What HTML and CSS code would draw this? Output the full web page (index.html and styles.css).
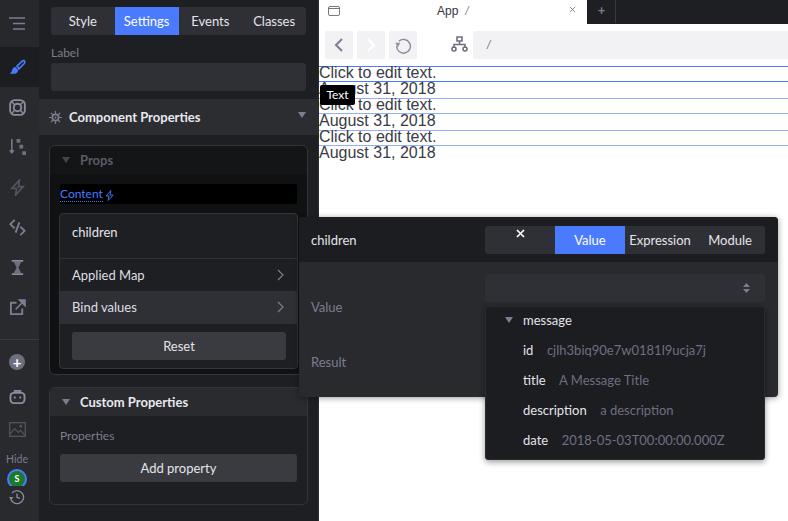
FILE: index.html
```html
<!DOCTYPE html>
<html lang="en">
<head>
<meta charset="utf-8">
<title>Editor</title>
<link rel="stylesheet" href="styles.css">
</head>
<body>
<div class="app">
  <nav class="rail">
    <div class="rail-item rail-top">
      <svg class="ico" viewBox="0 0 17 14"><path d="M0 1.500h16M4 7h12M4 12.500h12" fill="none" stroke="#7c7d90" stroke-width="1.700"/></svg>
    </div>
    <div class="rail-item rail-active">
      <svg class="ico" viewBox="0 0 18 18"><path d="M8.500 7.500L14 2.200c1-.9 2.700-.6 2.700.9 0 .9-.5 1.600-1 2.200L10.500 10.500z" fill="none" stroke="#4a7bff" stroke-width="1.800"/><path d="M7 8.500c-2 .1-3 1.300-3.500 3-.4 1.300-.8 2.500-2.500 4h5.500c1.800-.3 3-1.800 3.200-3.500z" fill="#4a7bff"/></svg>
    </div>
    <div class="rail-item">
      <svg class="ico" viewBox="0 0 18 18"><rect x="1.200" y="1.200" width="15.600" height="15.600" rx="5" fill="none" stroke="#8b8c9e" stroke-width="2"/><circle cx="9" cy="9" r="4" fill="none" stroke="#8b8c9e" stroke-width="2"/><path d="M3 3l3 3M15 3l-3 3M3 15l3-3M15 15l-3-3" stroke="#8b8c9e" stroke-width="1.500"/></svg>
    </div>
    <div class="rail-item">
      <svg class="ico" viewBox="0 0 18 18"><path d="M3 0v14" stroke="#7c7d90" stroke-width="1.600"/><path d="M0 12h6l-3 4z" fill="#7c7d90"/><path d="M8 0h4v4H8zM11 6h4v4h-4zM14 13h4v4h-4z" fill="#6d6e80"/></svg>
    </div>
    <div class="rail-item">
      <svg class="ico" viewBox="0 0 18 18"><path d="M11 1L3 10h5l-1 7 8-9h-5z" fill="none" stroke="#53545f" stroke-width="1.800"/></svg>
    </div>
    <div class="rail-item">
      <svg class="ico" viewBox="0 0 18 18"><path d="M6 1L1.500 5.500 6 10M12 8l4.500 4.500L12 17M11 3.500L7 14.500" fill="none" stroke="#7c7d90" stroke-width="2"/></svg>
    </div>
    <div class="rail-item">
      <svg class="ico" viewBox="0 0 18 18"><path d="M3 1h12v2H3zM3 15h12v2H3z" fill="#8b8c9e"/><path d="M5 3h8l-3 6 3 6H5l3-6z" fill="#6d6e80"/></svg>
    </div>
    <div class="rail-item">
      <svg class="ico" viewBox="0 0 18 18"><path d="M8 4H2v12h12v-6" fill="none" stroke="#7c7d90" stroke-width="2"/><path d="M7 11l8-8M11 1h6v6z" stroke="#7c7d90" stroke-width="1.600" fill="#7c7d90"/></svg>
    </div>
    <div class="rail-bottom">
      <div class="plus">+</div>
      <svg class="ico-b" viewBox="0 0 18 16"><rect x="1.500" y="3" width="15" height="11" rx="3.500" fill="none" stroke="#8b8c9e" stroke-width="2"/><path d="M5 1h8" stroke="#8b8c9e" stroke-width="2"/><path d="M5 7h2v2H5zM11 7h2v2h-2z" fill="#8b8c9e"/></svg>
      <svg class="ico-b" viewBox="0 0 18 16"><rect x=".7" y=".7" width="16.600" height="14.600" fill="none" stroke="#53545f" stroke-width="1.400"/><path d="M1 13l5-6 4 4 2-2 5 5" fill="none" stroke="#53545f" stroke-width="1.300"/><circle cx="12.500" cy="4.500" r="1.500" fill="#53545f"/></svg>
      <div class="hide">Hide</div>
      <div class="avatar-clip"><div class="avatar">S</div></div>
      <svg class="ico-h" viewBox="0 0 18 18"><path d="M3.500 4.500A7.300 7.300 0 1 1 1.800 9.500" fill="none" stroke="#8b8c9e" stroke-width="1.500"/><path d="M0 9h5l-2.500 3z" fill="#8b8c9e"/><path d="M9 5v4.500l3.500 1" fill="none" stroke="#8b8c9e" stroke-width="1.500"/></svg>
    </div>
  </nav>

  <aside class="panel">
    <div class="panel-top">
      <div class="seg">
        <span class="seg-tab">Style</span>
        <span class="seg-tab seg-on">Settings</span>
        <span class="seg-tab">Events</span>
        <span class="seg-tab">Classes</span>
      </div>
      <div class="label">Label</div>
      <div class="field"></div>
    </div>
    <div class="section-head">
      <svg class="bug" viewBox="0 0 14 14"><circle cx="7" cy="7" r="3.400" fill="none" stroke="#7c7d90" stroke-width="1.800"/><circle cx="7" cy="7" r="1" fill="#7c7d90"/><path d="M7 0v3M7 11v3M0 7h3M11 7h3M2 2l2 2M12 2l-2 2M2 12l2-2M12 12l-2-2" stroke="#7c7d90" stroke-width="1.300"/></svg>
      <span class="section-title">Component Properties</span>
      <span class="tri tri-head"></span>
    </div>
    <div class="props-box">
      <div class="props-head"><span class="tri tri-dim"></span><span class="props-title">Props</span></div>
      <div class="content-row"><span class="content-link">Content</span><svg class="bolt" viewBox="0 0 10 12"><path d="M6.500.5L1.200 6.500h3.300L3.500 11.500 9 5.500H5.500z" fill="none" stroke="#4a7bff" stroke-width="1"/></svg></div>
      <div class="menu">
        <div class="menu-title">children</div>
        <div class="menu-row">Applied Map<svg class="chev" viewBox="0 0 7 12"><path d="M1 1l5 5-5 5" fill="none" stroke="#7c7d90" stroke-width="1.200"/></svg></div>
        <div class="menu-row menu-row-on">Bind values<svg class="chev" viewBox="0 0 7 12"><path d="M1 1l5 5-5 5" fill="none" stroke="#7c7d90" stroke-width="1.200"/></svg></div>
        <div class="menu-foot"><div class="btn btn-reset">Reset</div></div>
      </div>
    </div>
    <div class="custom-box">
      <div class="custom-head"><span class="tri tri-custom"></span><span class="custom-title">Custom Properties</span></div>
      <div class="custom-body">
        <div class="label-sm">Properties</div>
        <div class="btn btn-add">Add property</div>
      </div>
    </div>
  </aside>

  <main class="preview">
    <div class="tabbar">
      <div class="tab">
        <svg class="win" viewBox="0 0 12 10"><rect x=".5" y=".5" width="11" height="9" rx="1.500" fill="none" stroke="#55565f" stroke-width=".8"/><path d="M.5 2.500h11" stroke="#55565f" stroke-width=".8"/></svg>
        <span class="tab-name">App</span><span class="tab-path">/</span>
        <svg class="tab-x" viewBox="0 0 8 8"><path d="M1 1l6 6M7 1l-6 6" stroke="#66676f" stroke-width=".9"/></svg>
      </div>
      <div class="tab-black"><div class="tab-plus">+</div></div>
    </div>
    <div class="navbar">
      <div class="nav-btn"><svg class="nav-ico" viewBox="0 0 10 14"><path d="M8 1L2 7l6 6" fill="none" stroke="#7c7d90" stroke-width="2"/></svg></div>
      <div class="nav-btn"><svg class="nav-ico" viewBox="0 0 10 14"><path d="M2 1l6 6-6 6" fill="none" stroke="#fff" stroke-width="2"/></svg></div>
      <div class="nav-btn"><svg class="nav-reload" viewBox="0 0 18 18"><path d="M4 4.500A7.300 7.300 0 1 1 1.700 9.500" fill="none" stroke="#8b8c9e" stroke-width="1.500"/><path d="M.5 6h5L3 11z" fill="#8b8c9e"/></svg></div>
      <svg class="tree" viewBox="0 0 17 16"><path d="M6 1h5v4H6zM8.500 5v3M3 12V8.500h11V12" fill="none" stroke="#6d6e80" stroke-width="1.600"/><circle cx="3" cy="13" r="2" fill="none" stroke="#6d6e80" stroke-width="1.600"/><circle cx="14" cy="13" r="2" fill="none" stroke="#6d6e80" stroke-width="1.600"/></svg>
      <div class="address">/</div>
    </div>
    <div class="canvas">
      <div class="line line-sel">Click to edit text.</div>
      <div class="line">August 31, 2018</div>
      <div class="line line-hov">Click to edit text.</div>
      <div class="line">August 31, 2018</div>
      <div class="line line-hov">Click to edit text.</div>
      <div class="line">August 31, 2018</div>
      <div class="tip">Text</div>
    </div>
  </main>

  <section class="binder">
    <header class="binder-head">
      <span class="binder-name">children</span>
      <div class="seg seg-binder">
        <span class="seg-tab"><svg class="close" viewBox="0 0 9 9"><path d="M1 1l7 7M8 1L1 8" stroke="#fff" stroke-width="1.700"/></svg></span>
        <span class="seg-tab seg-on">Value</span>
        <span class="seg-tab">Expression</span>
        <span class="seg-tab">Module</span>
      </div>
    </header>
    <div class="binder-body">
      <div class="binder-labels">
        <span class="binder-label">Value</span>
        <span class="binder-label">Result</span>
      </div>
      <div class="binder-value">
        <div class="select"><svg class="updown" viewBox="0 0 7 10"><path d="M3.500 0L7 4H0zM3.500 10L0 6h7z" fill="#7c7d90"/></svg></div>
        <div class="dropdown">
          <div class="dd-row dd-root"><span class="tri tri-dd"></span><span class="dd-key">message</span></div>
          <div class="dd-row"><span class="dd-key">id</span><span class="dd-val">cjlh3biq90e7w0181l9ucja7j</span></div>
          <div class="dd-row"><span class="dd-key">title</span><span class="dd-val">A Message Title</span></div>
          <div class="dd-row"><span class="dd-key">description</span><span class="dd-val">a description</span></div>
          <div class="dd-row"><span class="dd-key">date</span><span class="dd-val">2018-05-03T00:00:00.000Z</span></div>
        </div>
      </div>
    </div>
  </section>
</div>
</body>
</html>
```
FILE: styles.css
```css
* { box-sizing: border-box; }
html, body { margin: 0; padding: 0; height: 100%; overflow: hidden; }
body { font-family: "Lato", sans-serif; font-size: 13px; color: #e4e4ea; background: #fff; }
.app { position: relative; display: flex; width: 788px; height: 521px; overflow: hidden; }

.rail { width: 39px; flex: none; background: #292a2e; display: flex; flex-direction: column; }
.rail-item { height: 40px; padding-right: 5px; display: flex; align-items: center; justify-content: center; }
.rail-top { height: 47px; background: #27282c; }
.rail-active { background: #1c1d20; }
.ico { width: 17px; height: 17px; display: block; }
.rail-bottom { margin-top: 12px; height: 182px; border-top: 1px solid #3a3b40; display: flex; flex-direction: column; align-items: center; padding: 14px 5px 0 0; }
.plus { width: 16px; height: 16px; border-radius: 50%; background: #6d6e80; color: #fff; font-size: 15px; font-weight: 700; line-height: 16px; text-align: center; }
.ico-b { width: 17px; height: 15px; margin-top: 20px; display: block; }
.ico-b + .ico-b { margin-top: 17px; }
.hide { margin-top: 15px; font-size: 10.5px; line-height: 14px; color: #7c7d90; }
.avatar-clip { width: 20px; height: 17px; margin-top: 3px; overflow: hidden; flex: none; }
.avatar { width: 20px; height: 20px; border: 2px solid #4a7bff; border-radius: 50%; background: #1a7a2a; color: #fff; font-size: 9px; font-weight: 700; line-height: 16px; text-align: center; }
.ico-h { width: 16px; height: 16px; display: block; margin-top: 3px; }

.panel { width: 280px; flex: none; background: #1e1f22; border-right: 1px solid #2c2d31; display: flex; flex-direction: column; }
.panel-top { padding: 7px 12px 8px; }
.seg { display: flex; height: 28px; background: #2f3035; border-radius: 3px; overflow: hidden; }
.seg-tab { flex: 1; display: flex; align-items: center; justify-content: center; font-size: 13px; color: #e4e4ea; }
.seg-on { background: #4a7bff; color: #fff; }
.label { margin-top: 9px; height: 19px; line-height: 17px; font-size: 12px; color: #7c7d90; }
.field { height: 28px; background: #2f3035; border-radius: 3px; }
.section-head { height: 36px; background: #2c2d31; display: flex; align-items: center; padding-left: 10px; position: relative; }
.bug { width: 13px; height: 13px; margin-right: 7px; }
.section-title { font-size: 13px; font-weight: 700; color: #e8e8ee; }
.tri { width: 0; height: 0; border-left: 4px solid transparent; border-right: 4px solid transparent; border-top: 6px solid #7c7d90; display: block; }
.tri-head { position: absolute; right: 12px; top: 13px; }
.props-box { position: relative; margin: 10px 10px 0; height: 230px; background: #101113; border: 1px solid #34353a; border-radius: 6px; }
.props-head { height: 28px; background: #141517; border-radius: 6px 6px 0 0; display: flex; align-items: center; padding-left: 12px; }
.tri-dim { border-top-color: #44454f; margin-right: 10px; }
.props-title { font-weight: 700; font-size: 13px; color: #5a5b63; }
.content-row { position: absolute; left: 10px; right: 10px; top: 38px; height: 20px; background: #000; border-radius: 2px; display: flex; align-items: center; }
.content-link { color: #4a7bff; font-size: 12px; line-height: 14px; border-bottom: 1px dotted #4a7bff; }
.bolt { width: 9px; height: 11px; margin-left: 2px; margin-top: 3px; }
.menu { position: absolute; left: 9px; right: 9px; top: 67px; height: 156px; background: #1e1f22; border: 1px solid #34353a; border-radius: 4px; }
.menu-title { height: 45px; padding: 10px 12px 0; font-size: 13px; border-bottom: 1px solid #303136; }
.menu-row { height: 32px; display: flex; align-items: center; justify-content: space-between; padding: 0 12px; font-size: 13px; color: #dedee4; }
.menu-row-on { background: #2f3035; height: 33px; padding-bottom: 2px; }
.chev { width: 7px; height: 12px; display: block; margin-right: 1px; }
.menu-foot { padding: 8px 11px 0 12px; }
.btn { height: 28px; background: #3a3b40; border-radius: 3px; display: flex; align-items: center; justify-content: center; font-size: 13px; color: #e4e4ea; }
.custom-box { margin: 12px 10px 0; height: 118px; border: 1px solid #34353a; border-radius: 6px; }
.custom-head { height: 28px; background: #2a2b2f; border-radius: 6px 6px 0 0; display: flex; align-items: center; padding-left: 12px; }
.tri-custom { margin-right: 10px; }
.custom-title { font-weight: 700; font-size: 13px; color: #e8e8ee; }
.custom-body { padding: 12px 10px 0; }
.label-sm { font-size: 12px; line-height: 15px; color: #7c7d90; }
.btn-add { margin-top: 11px; }

.preview { flex: 1; min-width: 0; background: #fff; display: flex; flex-direction: column; }
.tabbar { height: 24px; display: flex; }
.tab { width: 268px; flex: none; height: 24px; display: flex; align-items: center; position: relative; padding: 0 0 2px 9px; font-family: "Liberation Sans", sans-serif; font-size: 12px; color: #33343c; }
.win { width: 12px; height: 10px; }
.tab-name { margin-left: 97px; }
.tab-path { margin-left: 7px; color: #8b8c9e; font-style: italic; }
.tab-x { width: 7px; height: 7px; position: absolute; right: 11px; top: 6px; }
.tab-black { flex: 1; background: #1e1f22; border-left: 1px solid #1e1f22; }
.tab-plus { width: 28px; height: 23px; border-right: 1px solid #3a3b40; color: #7c7d90; font-size: 13px; font-weight: 700; text-align: center; line-height: 20px; }
.navbar { height: 42px; padding: 7px 0 7px 6px; display: flex; gap: 4px; align-items: flex-start; }
.nav-btn { width: 28px; height: 28px; background: #f2f2f4; border-radius: 2px; display: flex; align-items: center; justify-content: center; }
.nav-ico { width: 10px; height: 14px; }
.nav-reload { width: 17px; height: 17px; }
.tree { width: 17px; height: 16px; margin: 5px 1px 0 30px; }
.address { flex: 1; height: 28px; background: #f2f2f4; border-radius: 3px 0 0 3px; padding-left: 14px; line-height: 29px; font-family: "Liberation Sans", sans-serif; font-size: 12px; font-style: italic; color: #7c7d90; }
.canvas { position: relative; flex: 1; font-family: "Liberation Sans", sans-serif; font-size: 16px; line-height: 14px; color: #3a3b45; }
.line { height: 16px; white-space: nowrap; }
.line-sel { box-shadow: inset 0 1px 0 #4a7bff, inset 0 -1px 0 #4a7bff; }
.line-hov { box-shadow: inset 0 1px 0 #92aefc, inset 0 -1px 0 #92aefc; }
.tip { position: absolute; left: 1px; top: 19px; width: 35px; height: 20px; background: #000; color: #fff; border-radius: 2px; font-family: "Lato", sans-serif; font-size: 12px; line-height: 20px; text-align: center; }

.binder { position: absolute; left: 299px; top: 217px; width: 479px; height: 180px; background: #292a2e; border-radius: 4px; box-shadow: 0 1px 6px rgba(0,0,0,.4); }
.binder-head { height: 45px; background: #1c1d20; border-radius: 4px 4px 0 0; display: flex; align-items: center; justify-content: space-between; padding: 0 13px 0 12px; }
.binder-name { font-size: 13px; }
.seg-binder { width: 280px; }
.close { width: 9px; height: 9px; margin-top: -12px; }
.binder-body { display: flex; justify-content: space-between; padding: 12px 13px 0 12px; position: relative; }
.binder-labels { display: flex; flex-direction: column; padding-top: 25px; gap: 39px; }
.binder-label { font-size: 13px; line-height: 16px; color: #7c7d90; }
.binder-value { width: 280px; }
.select { height: 28px; background: #2f3035; border-radius: 3px; display: flex; align-items: center; justify-content: flex-end; padding-right: 15px; }
.updown { width: 7px; height: 10px; }
.dropdown { margin-top: 4px; height: 154px; background: #1c1d20; border-radius: 3px; border: 1px solid #2a2b2f; box-shadow: 0 2px 6px rgba(0,0,0,.4); padding: 0 0 0 37px; position: relative; }
.dd-row { height: 30px; display: flex; align-items: center; gap: 13.500px; font-size: 13px; }
.dd-root { height: 28px; padding-bottom: 2px; position: relative; }
.tri-dd { position: absolute; left: -18px; top: 10px; }
.dd-key { color: #e4e4ea; }
.dd-val { color: #6e6f84; }
```
